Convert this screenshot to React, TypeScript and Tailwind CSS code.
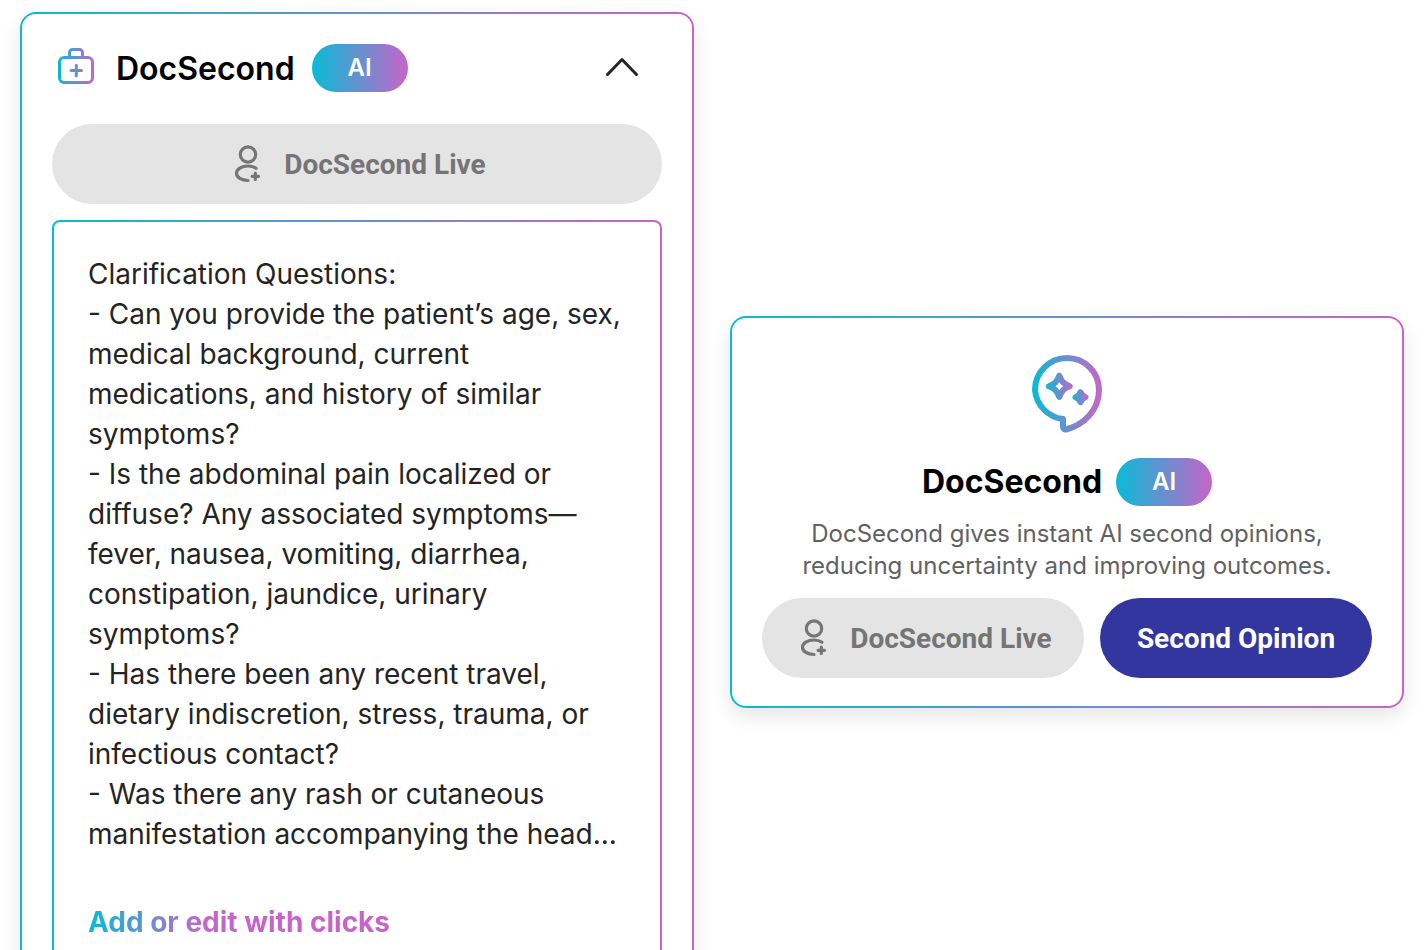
import type { ReactNode } from "react";

type GradientFrameProps = {
  children: ReactNode;
};

const questions = [
  "Can you provide the patient’s age, sex, medical background, current medications, and history of similar symptoms?",
  "Is the abdominal pain localized or diffuse? Any associated symptoms—fever, nausea, vomiting, diarrhea, constipation, jaundice, urinary symptoms?",
  "Has there been any recent travel, dietary indiscretion, stress, trauma, or infectious contact?",
  "Was there any rash or cutaneous manifestation accompanying the head...",
];

function MedicalBagIcon() {
  return (
    <svg width="40" height="40" viewBox="0 2 40 40" fill="none" aria-hidden="true">
      <defs>
        <linearGradient id="bag" gradientUnits="userSpaceOnUse" x1="2" y1="0" x2="38" y2="0">
          <stop stopColor="#08bbd7" />
          <stop offset="1" stopColor="#c864c8" />
        </linearGradient>
      </defs>
      <g stroke="url(#bag)" strokeWidth="3" strokeLinecap="round" strokeLinejoin="round">
        <rect x="3.5" y="11.5" width="33" height="25" rx="4.5" />
        <path d="M13.5 11V6.500a3 3 0 0 1 3-3h7a3 3 0 0 1 3 3V11" />
        <path d="M20.300 19.300v10.400M15.100 24.500h10.400" />
      </g>
    </svg>
  );
}

function ChatSparkleIcon() {
  return (
    <svg width="80" height="80" viewBox="0 -1 80 80" fill="none" aria-hidden="true">
      <defs>
        <linearGradient id="bubble" gradientUnits="userSpaceOnUse" x1="5" y1="0" x2="75" y2="0">
          <stop stopColor="#08bbd7" />
          <stop offset="1" stopColor="#c864c8" />
        </linearGradient>
        <linearGradient id="starLarge" gradientUnits="userSpaceOnUse" x1="18" y1="0" x2="46" y2="0">
          <stop stopColor="#08bbd7" />
          <stop offset="1" stopColor="#c864c8" />
        </linearGradient>
        <linearGradient id="starSmall" gradientUnits="userSpaceOnUse" x1="45" y1="0" x2="61" y2="0">
          <stop stopColor="#08bbd7" />
          <stop offset="1" stopColor="#c864c8" />
        </linearGradient>
      </defs>
      <path
        d="M36 64A32 32 0 0 1 8 35a32 32 0 0 1 32-32c17.700 0 32 14 32 32 0 20-15 35-33 39.500a2.500 2.500 0 0 1-3-2.500Z"
        stroke="url(#bubble)"
        strokeWidth="6"
        strokeLinejoin="round"
      />
      <path
        d="M32.300 20.700c2.400 6.200 4.300 8.200 10.400 10.600-6.100 2.400-8 4.400-10.400 10.600-2.400-6.200-4.300-8.200-10.400-10.600 6.100-2.400 8-4.400 10.400-10.600Z"
        stroke="url(#starLarge)"
        strokeWidth="6"
        strokeLinejoin="round"
      />
      <path
        d="M53.500 37.200c1.200 3 2 3.800 5 5-3 1.200-3.800 2-5 5-1.200-3-2-3.800-5-5 3-1.200 3.800-2 5-5Z"
        fill="url(#starSmall)"
        stroke="url(#starSmall)"
        strokeWidth="6"
        strokeLinejoin="round"
      />
    </svg>
  );
}

function UserPlusIcon() {
  return (
    <svg
      width="40"
      height="40"
      viewBox="0 0 40 40"
      fill="none"
      stroke="currentColor"
      strokeWidth="3.200"
      strokeLinecap="round"
      aria-hidden="true"
    >
      <circle cx="20" cy="9.500" r="7.700" />
      <path d="M28 23.300C26 21.800 23.200 21 20 21c-6.500 0-11.500 3.100-11.500 7.300s5 7.200 11.500 7.200" />
      <path d="M27.300 28.100v6.400M24.100 31.300h6.400" />
    </svg>
  );
}

function GradientFrame({ children }: GradientFrameProps) {
  return (
    <section className="flex-1 min-w-0 rounded-2xl bg-linear-to-r/srgb from-[#08bbd7] to-[#c864c8] p-0.5 shadow-[0_8px_20px_rgba(0,0,0,0.1)]">
      <div className="rounded-[14px] bg-white px-[30px] pt-[30px] pb-7">{children}</div>
    </section>
  );
}

function AiBadge() {
  return (
    <span className="flex h-12 w-24 items-center justify-center rounded-full bg-linear-to-r/srgb from-[#08bbd7] to-[#c864c8] text-2xl font-semibold text-white">
      AI
    </span>
  );
}

function LiveButton({ className }: { className: string }) {
  return (
    <button
      type="button"
      className={`flex h-20 items-center justify-center gap-4 rounded-full bg-[#e4e4e4] pt-0.5 font-[Roboto,sans-serif] text-[28px] font-bold text-[#757575] ${className}`}
    >
      <UserPlusIcon />
      DocSecond Live
    </button>
  );
}

function QuestionsCard() {
  return (
    <GradientFrame>
      <header className="flex items-center pl-1">
        <MedicalBagIcon />
        <h2 className="ml-5 pt-0.5 text-[32px] leading-10 font-semibold text-black">DocSecond</h2>
        <div className="ml-[17px]">
          <AiBadge />
        </div>
        <button type="button" aria-label="Collapse" className="ml-auto mr-5 text-[#242424]">
          <svg
            width="40"
            height="40"
            viewBox="0 0 40 40"
            fill="none"
            stroke="currentColor"
            strokeWidth="3"
            strokeLinecap="round"
            strokeLinejoin="round"
            aria-hidden="true"
          >
            <path d="M5.500 26.500 20 11.500l14.500 15" />
          </svg>
        </button>
      </header>

      <LiveButton className="mt-8 w-full" />

      <div className="mt-4 rounded-lg bg-linear-to-r/srgb from-[#08bbd7] to-[#c864c8] p-0.5">
        <div className="rounded-md bg-white px-[34px] pt-8 pb-[38px] text-[28px] leading-10 text-[#242424]">
          <p>Clarification Questions:</p>
          {questions.map((question) => (
            <p key={question}>{`- ${question}`}</p>
          ))}
          <a
            href="#edit"
            className="mt-12 block w-fit bg-linear-to-r/srgb from-[#08bbd7] to-[#c864c8] to-40% bg-clip-text font-bold text-transparent"
          >
            Add or edit with clicks
          </a>
        </div>
      </div>
    </GradientFrame>
  );
}

function IntroCard() {
  return (
    <GradientFrame>
      <div className="flex flex-col items-center pt-1.5">
        <ChatSparkleIcon />
        <div className="mt-6 flex items-center gap-3.5">
          <h2 className="text-[32px] font-bold text-black">DocSecond</h2>
          <AiBadge />
        </div>
        <p className="mt-3 text-center text-2xl leading-8 text-[#616161]">
          DocSecond gives instant AI second opinions, reducing uncertainty and improving outcomes.
        </p>
      </div>
      <div className="mt-4 flex gap-4">
        <LiveButton className="flex-1" />
        <button
          type="button"
          className="h-20 w-68 rounded-full bg-[#32369e] pt-0.5 font-[Roboto,sans-serif] text-[28px] font-bold text-white"
        >
          Second Opinion
        </button>
      </div>
    </GradientFrame>
  );
}

export default function App() {
  return (
    <main className="h-screen overflow-hidden bg-white font-[Inter,sans-serif]">
      <div className="flex items-center gap-9 px-5 py-3">
        <QuestionsCard />
        <IntroCard />
      </div>
    </main>
  );
}
